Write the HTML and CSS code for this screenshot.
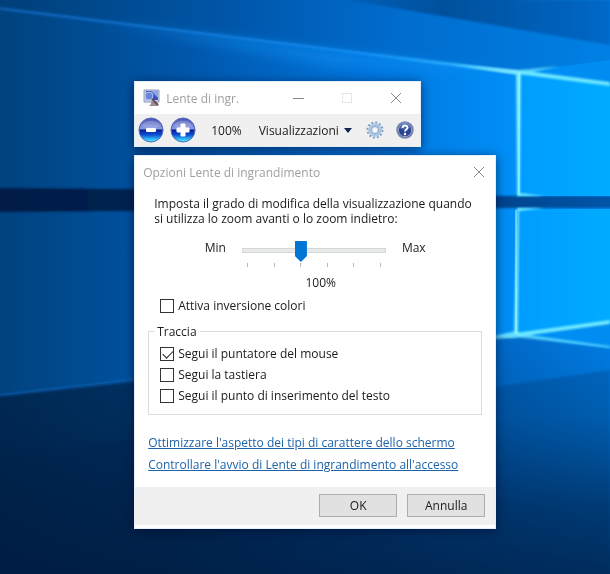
FILE: index.html
```html
<!DOCTYPE html>
<html lang="it">

<head>
    <meta charset="UTF-8">
    <meta name="viewport" content="width=device-width, initial-scale=1.0">
    <title>Lente di ingrandimento</title>
    <link rel="stylesheet" href="styles.css">
</head>

<body>
    <svg class="wallpaper" viewBox="0 0 610 574" preserveAspectRatio="xMidYMid slice" aria-hidden="true">
        <defs>
            <linearGradient id="sky" x1="0" x2="1" y1="0" y2="0">
                <stop offset="0" stop-color="#00427e" />
                <stop offset=".3" stop-color="#0056aa" />
                <stop offset=".6" stop-color="#0074dc" />
                <stop offset=".85" stop-color="#0090f8" />
                <stop offset="1" stop-color="#008cf0" />
            </linearGradient>
            <linearGradient id="top" x1="0" x2="1" y1="0" y2="0">
                <stop offset="0" stop-color="#003f78" />
                <stop offset=".35" stop-color="#0054a6" />
                <stop offset=".65" stop-color="#006cce" />
                <stop offset="1" stop-color="#0080e4" />
            </linearGradient>
            <linearGradient id="corner" x1="0" x2="1" y1="0" y2="0">
                <stop offset="0" stop-color="#0062be" />
                <stop offset=".4" stop-color="#00509c" />
                <stop offset="1" stop-color="#0068c8" />
            </linearGradient>
            <linearGradient id="floor" x1="0" x2="1" y1="0" y2="0">
                <stop offset="0" stop-color="#002852" />
                <stop offset=".3" stop-color="#003468" />
                <stop offset=".75" stop-color="#0064c0" />
                <stop offset="1" stop-color="#0080ea" />
            </linearGradient>
            <linearGradient id="shade" x1="0" x2="0" y1="0" y2="1">
                <stop offset="0" stop-color="#001a3e" stop-opacity="0" />
                <stop offset=".3" stop-color="#001a3e" stop-opacity=".15" />
                <stop offset=".65" stop-color="#001a3e" stop-opacity=".6" />
                <stop offset="1" stop-color="#001a3e" stop-opacity=".85" />
            </linearGradient>
            <linearGradient id="bar" x1="0" x2="1" y1="0" y2="0">
                <stop offset="0" stop-color="#001b44" />
                <stop offset=".6" stop-color="#002c66" />
                <stop offset=".85" stop-color="#004a96" />
                <stop offset="1" stop-color="#0058ac" />
            </linearGradient>
            <linearGradient id="pane" x1="0" x2="1" y1="0" y2="0">
                <stop offset="0" stop-color="#009cff" />
                <stop offset="1" stop-color="#00acff" />
            </linearGradient>
            <linearGradient id="beam" x1="0" x2="1" y1="0" y2="0">
                <stop offset="0" stop-color="#0a5cae" />
                <stop offset=".7" stop-color="#0c8cf4" />
                <stop offset=".9" stop-color="#30b4ff" />
                <stop offset="1" stop-color="#b8f8ff" />
            </linearGradient>
            <filter id="soft" x="-20%" y="-20%" width="140%" height="140%">
                <feGaussianBlur stdDeviation="1" />
            </filter>
            <filter id="glow" x="-20%" y="-50%" width="140%" height="200%">
                <feGaussianBlur stdDeviation="6" />
            </filter>
        </defs>
        <rect width="610" height="574" fill="url(#sky)" />
        <path d="M0 0H610V60L518 72L0 8Z" fill="url(#top)" />
        <path d="M330 -3L610 45V0Z" fill="url(#corner)" filter="url(#soft)" />
        <path d="M100 22L518 72L330 66Z" fill="#149aff" opacity=".4" filter="url(#glow)" />
        <path d="M0 7L518 71V74L0 10Z" fill="url(#beam)" filter="url(#soft)" />
        <path d="M-20 398L134 380L515 335L630 352V600H-20Z" fill="url(#floor)" />
        <path d="M0 394L134 379L515 334V337L134 382L0 397Z" fill="url(#beam)" opacity=".6" filter="url(#soft)" />
        <path d="M-20 398L134 380L515 335L630 352V600H-20Z" fill="url(#shade)" />
        <path d="M0 458L134 440L610 370V574H0Z" fill="#002048" opacity=".2" filter="url(#soft)" />
        <path d="M-20 188L134 189L515 196H630V208H515L134 211L-20 212Z" fill="url(#bar)" filter="url(#soft)" />
        <!-- window panes -->
        <path d="M519 72L610 85V196H519Z" fill="url(#pane)" />
        <path d="M518 209H610V323L517 334Z" fill="url(#pane)" />
        <g fill="#6ee8ff" filter="url(#soft)">
            <path d="M516 70L521 72L520 193L545 196H517Z" />
            <path d="M517 208H545L519 211L518 334H514Z" />
            <path d="M518 70L610 82V86L518 74Z" />
            <path d="M515 333L610 320V324L516 337Z" />
            <path d="M515 333L610 346V348L515 337Z" opacity=".7" />
            <path d="M450 64L518 70L560 66L520 75Z" opacity=".7" />
            <path d="M490 337L515 331L530 335L515 338Z" opacity=".8" />
        </g>
        <path d="M519 72V195M516 210V334" stroke="#a8f6ff" stroke-width="1" />
    </svg>

    <main class="desktop">
        <section class="window magnifier">
            <header class="titlebar">
                <svg class="app-icon" width="18" height="18" viewBox="0 0 18 18" aria-hidden="true">
                    <path d="M1 1H16V13H1Z" fill="#c9cbe0" stroke="#9298bc" />
                    <rect x="3" y="2" width="12" height="9" fill="#3553bd" />
                    <path d="M8 2H15V9Z" fill="#86a4ea" />
                    <path d="M8 13H13V15L16 17H6L8 15Z" fill="#9a8d98" />
                    <circle cx="6" cy="7" r="4" fill="#7897e4" fill-opacity=".75" stroke="#b4c2ee" />
                    <path d="M9 10L15 16" stroke="#6b4a50" stroke-width="2" />
                </svg>
                <h1 class="title">Lente di ingr.</h1>
                <button type="button" class="caption" aria-label="Riduci a icona">
                    <svg width="12" height="12" viewBox="0 0 12 12"><path d="M1 6.500H12" stroke="#888" /></svg>
                </button>
                <button type="button" class="caption" aria-label="Ingrandisci" disabled>
                    <svg width="12" height="12" viewBox="0 0 12 12"><rect x="1.500" y="1.500" width="9" height="9" fill="none" stroke="#e6e6e6" /></svg>
                </button>
                <button type="button" class="caption" aria-label="Chiudi">
                    <svg width="12" height="12" viewBox="0 0 12 12"><path d="M1 1L11 11M11 1L1 11" stroke="#888" /></svg>
                </button>
            </header>
            <div class="toolbar">
                <button type="button" class="tool" aria-label="Zoom indietro">
                    <svg width="26" height="26" viewBox="0 0 26 26">
                        <defs>
                            <linearGradient id="ball" x1="0" x2="0" y1="0" y2="1">
                                <stop offset="0" stop-color="#4450b4" />
                                <stop offset=".45" stop-color="#8c9ce2" />
                                <stop offset=".5" stop-color="#0a1c94" />
                                <stop offset=".7" stop-color="#0a50d4" />
                                <stop offset=".95" stop-color="#40e0ff" />
                            </linearGradient>
                        </defs>
                        <circle cx="13" cy="13" r="12" fill="url(#ball)" stroke="#5a68b4" />
                        <path d="M4 9C6 2 20 2 22 9C18 12 8 12 4 9Z" fill="#fff" opacity=".2" />
                        <rect x="8" y="11" width="10" height="4" rx="1" fill="#fff" />
                    </svg>
                </button>
                <button type="button" class="tool" aria-label="Zoom avanti">
                    <svg width="26" height="26" viewBox="0 0 26 26">
                        <circle cx="13" cy="13" r="12" fill="url(#ball)" stroke="#5a68b4" />
                        <path d="M4 9C6 2 20 2 22 9C18 12 8 12 4 9Z" fill="#fff" opacity=".2" />
                        <path d="M11 7H15V11H19V15H15V19H11V15H7V11H11Z" fill="#fff" stroke="#fff" stroke-linejoin="round" />
                    </svg>
                </button>
                <span class="level">100%</span>
                <button type="button" class="tool views">Visualizzazioni
                    <svg width="8" height="5" viewBox="0 0 8 5"><path d="M0 0H8L4 5Z" fill="#10264e" /></svg>
                </button>
                <button type="button" class="tool gear" aria-label="Opzioni">
                    <svg width="18" height="18" viewBox="0 0 18 18">
                        <circle cx="9" cy="9" r="7.500" fill="none" stroke="#7f9fc4" stroke-width="2" stroke-dasharray="2 1.927" />
                        <circle cx="9" cy="9" r="5.300" fill="none" stroke="#a9c6e2" stroke-width="3" />
                        <circle cx="9" cy="9" r="3.500" fill="#f3f6fa" stroke="#7c9dc4" />
                    </svg>
                </button>
                <button type="button" class="tool" aria-label="Guida">
                    <svg width="18" height="18" viewBox="0 0 18 18">
                        <circle cx="9" cy="9" r="8" fill="#2a4494" stroke="#7c88ac" stroke-width="1.500" />
                        <circle cx="9" cy="9" r="6.700" fill="none" stroke="#b4c0dc" stroke-width=".8" />
                        <path d="M3 7A6 6 0 0 1 15 7Q9 10 3 7Z" fill="#6c87cc" opacity=".5" />
                        <path d="M6.500 7C6.500 3.600 11.700 3.800 11.500 6.700C11.400 8.400 9 8.600 9 10.500" fill="none" stroke="#fff" stroke-width="1.800" />
                        <circle cx="9" cy="13" r="1.200" fill="#fff" />
                    </svg>
                </button>
            </div>
        </section>

        <form class="window options">
            <header class="titlebar">
                <h2 class="title">Opzioni Lente di ingrandimento</h2>
                <button type="button" class="caption" aria-label="Chiudi">
                    <svg width="12" height="12" viewBox="0 0 12 12"><path d="M1 1L11 11M11 1L1 11" stroke="#888" /></svg>
                </button>
            </header>
            <div class="content">
                <label class="intro" for="zoom">Imposta il grado di modifica della visualizzazione quando<br>si utilizza lo zoom avanti o lo zoom indietro:</label>
                <div class="zoom">
                    <span>Min</span>
                    <div class="scale">
                        <input type="range" id="zoom" min="0" max="5" value="2">
                        <div class="ticks"><i></i><i></i><i></i><i></i><i></i><i></i></div>
                    </div>
                    <span>Max</span>
                </div>
                <output class="value" for="zoom">100%</output>
                <label class="check invert"><input type="checkbox">Attiva inversione colori</label>
                <fieldset class="group">
                    <legend>Traccia</legend>
                    <label class="check"><input type="checkbox" checked>Segui il puntatore del mouse</label>
                    <label class="check"><input type="checkbox">Segui la tastiera</label>
                    <label class="check"><input type="checkbox">Segui il punto di inserimento del testo</label>
                </fieldset>
                <nav class="links">
                    <a href="#">Ottimizzare l'aspetto dei tipi di carattere dello schermo</a>
                    <a href="#">Controllare l'avvio di Lente di ingrandimento all'accesso</a>
                </nav>
            </div>
            <footer class="actions">
                <button type="button">OK</button>
                <button type="button">Annulla</button>
            </footer>
        </form>
    </main>
</body>

</html>
```
FILE: styles.css
```css
* {
    margin: 0;
    padding: 0;
    box-sizing: border-box;
}

body {
    min-height: 100vh;
    background-color: #00427e;
    color: #1a1a1a;
    font-family: "Open Sans", "Noto Sans", sans-serif;
    font-size: 12px;
    line-height: 15px;
}

button {
    font: inherit;
    color: inherit;
}

.wallpaper {
    position: fixed;
    inset: 0;
    z-index: -1;
    width: 100%;
    height: 100%;
}

.desktop {
    display: flex;
    flex-direction: column;
    align-items: flex-start;
    gap: 8px;
    padding: 81px 0 45px 22%;
}

.window {
    background-color: #fff;
    border: 1px solid #e4eef8;
    box-shadow: 0 2px 10px rgba(0, 10, 40, 0.6);
}

.magnifier {
    width: 287px;
}

.options {
    width: 362px;
}

.titlebar {
    display: flex;
    align-items: center;
    height: 32px;
    padding-left: 8px;
}

.title {
    flex: 1;
    font-size: 12px;
    font-weight: normal;
    color: #a0a0a0;
}

.app-icon {
    margin-right: 5px;
}

.caption {
    display: flex;
    align-items: center;
    justify-content: center;
    width: 49px;
    height: 30px;
    border: none;
    background: none;
}

.options .caption {
    width: 32px;
}

/* toolbar */
.toolbar {
    display: flex;
    align-items: center;
    height: 32px;
    padding: 0 5px 0 3px;
    background-color: #f0f0f0;
}

.tool {
    display: flex;
    align-items: center;
    border: none;
    background: none;
    margin-right: 6px;
}

.level {
    margin: 0 17px 0 9px;
}

.views {
    gap: 5px;
    margin-right: 14px;
}

.gear {
    margin-right: 12px;
}

.toolbar .tool:last-child {
    margin-right: 0;
}

/* options */
.content {
    padding: 8px 13px 15px;
}

.intro {
    display: block;
    padding-left: 6px;
}

.zoom {
    display: flex;
    justify-content: center;
    gap: 16px;
    padding-top: 14px;
}

.scale {
    width: 144px;
}

.zoom input {
    appearance: none;
    display: block;
    width: 100%;
    height: 21px;
    background: none;
}

.zoom input::-webkit-slider-runnable-track {
    height: 5px;
    border: 1px solid #d6d6d6;
    background-color: #e7eaea;
}

.zoom input::-webkit-slider-thumb {
    appearance: none;
    width: 12px;
    height: 21px;
    margin-top: -8px;
    background-color: #0075d3;
    clip-path: polygon(0 0, 100% 0, 100% 72%, 50% 100%, 0 72%);
}

.ticks {
    display: flex;
    justify-content: space-between;
    padding: 2px 5px 0;
}

.ticks i {
    width: 1px;
    height: 4px;
    background-color: #b8b8b8;
}

.value {
    display: block;
    padding: 8px 0 5px 11px;
    text-align: center;
}

.check {
    display: flex;
    align-items: center;
    gap: 4px;
    height: 21px;
}

.check input {
    appearance: none;
    width: 14px;
    height: 14px;
    border: 1px solid #333;
    background-color: #fff;
}

.check input:checked::before {
    content: "";
    display: block;
    width: 9px;
    height: 5px;
    margin: 2px 0 0 2px;
    border: solid #222;
    border-width: 0 0 1px 1px;
    transform: rotate(-45deg);
}

.invert {
    margin-left: 12px;
}

.group {
    padding: 4px 11px 8px;
    margin-top: 8px;
    border: 1px solid #dcdcdc;
}

.group legend {
    margin-left: -6px;
    padding: 0 3px;
}

.links {
    display: flex;
    flex-direction: column;
    align-items: flex-start;
    gap: 7px;
    margin-top: 20px;
}

.links a {
    color: #1e63a8;
}

.actions {
    display: flex;
    justify-content: flex-end;
    gap: 10px;
    padding: 7px 10px 8px;
    margin-bottom: 3px;
    background-color: #f0f0f0;
}

.actions button {
    width: 78px;
    height: 23px;
    border: 1px solid #adadad;
    background-color: #e1e1e1;
}
```
